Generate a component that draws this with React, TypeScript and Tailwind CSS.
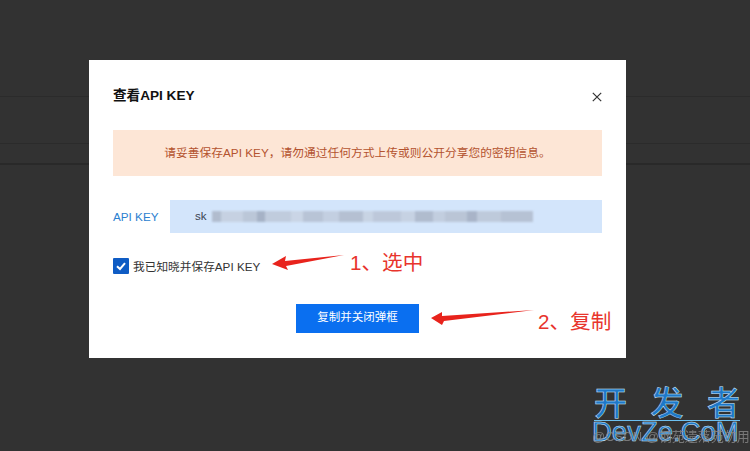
const cjk = 'font-["Liberation_Sans","Noto_Sans_CJK_SC",sans-serif]';

const blurBlocks = [
  ['w-[9px]', 'bg-[#a9b3c4]'], ['w-[22px]', 'bg-[#c3cddc]'], ['w-[14px]', 'bg-[#b6c0d0]'], ['w-[8px]', 'bg-[#9ba6b9]'],
  ['w-[26px]', 'bg-[#bcc6d6]'], ['w-[12px]', 'bg-[#c8d2e1]'], ['w-[20px]', 'bg-[#b2bccd]'], ['w-[16px]', 'bg-[#c0cadb]'],
  ['w-[24px]', 'bg-[#aeb8c9]'], ['w-[10px]', 'bg-[#c6d0df]'], ['w-[28px]', 'bg-[#b8c2d3]'], ['w-[14px]', 'bg-[#c4cede]'],
  ['w-[18px]', 'bg-[#a8b2c4]'], ['w-[12px]', 'bg-[#bfc9d9]'], ['w-[22px]', 'bg-[#b4bece]'], ['w-[10px]', 'bg-[#9fa9bc]'],
  ['w-[24px]', 'bg-[#bac4d4]'], ['w-[32px]', 'bg-[#b0bacb]'],
];

function Arrow({ className, width, height, points }: { className: string; width: number; height: number; points: string }) {
  return (
    <svg className={className} width={width} height={height} viewBox={`0 0 ${width} ${height}`}>
      <polygon points={points} fill="#e8231c" />
    </svg>
  );
}

export default function App() {
  return (
    <div className={`relative w-[750px] h-[451px] overflow-hidden bg-[#323232] ${cjk}`}>
      {/* dimmed page behind the dialog */}
      <div className="h-[97px] border-b border-[#2b2b2b]" />
      <div className="h-[47px] border-b border-[#2b2b2b]" />
      <div className="h-[21px] border-b-2 border-[#292929]" />

      <div className="absolute left-[89px] top-[60px] w-[537px] h-[298px] bg-white px-6 flex flex-col">
        <div className="flex items-start justify-between pt-[27px] h-[70px]">
          <h2 className="text-[13.6px] leading-[18px] font-bold text-[#111]">查看API KEY</h2>
          <svg className="mt-[5px]" width="10" height="10" viewBox="0 0 10 10" fill="none" stroke="#333" strokeWidth="1.2">
            <path d="M0.8 0.8L9.2 9.2M9.2 0.8L0.8 9.2" />
          </svg>
        </div>

        <div className="h-[46px] bg-[#fde6d6] flex items-center justify-center text-[11.75px] text-[#b4532f]">
          请妥善保存API KEY，请勿通过任何方式上传或则公开分享您的密钥信息。
        </div>

        <div className="flex items-center mt-6 h-[33px]">
          <span className="w-[57px] shrink-0 text-[11.7px] text-[#2b7fd0]">API KEY</span>
          <div className="flex-1 h-full bg-[#d3e5fb] flex items-center pl-[25px]">
            <span className="text-[11.5px] text-[#3a4350] w-[17px]">sk</span>
            <div className="flex h-[11px] blur-[1px] opacity-80">
              {blurBlocks.map(([w, c], i) => (
                <div key={i} className={`${w} ${c} h-full`} />
              ))}
            </div>
          </div>
        </div>

        <div className="flex items-center mt-[24px] gap-[4px]">
          <span className="w-4 h-4 bg-[#0f5cc4] rounded-[1px] flex items-center justify-center">
            <svg width="12" height="12" viewBox="0 0 12 12" fill="none" stroke="#fff" strokeWidth="2">
              <path d="M2 6.2L5 9L10 3.2" />
            </svg>
          </span>
          <span className="text-[11.7px] text-[#333] translate-y-[1px]">我已知晓并保存API KEY</span>
        </div>

        <button className="self-end mr-[183px] mt-[29px] w-[123px] h-[29px] bg-[#0a6ff0] text-white text-[11.5px]">
          复制并关闭弹框
        </button>
      </div>

      {/* annotations */}
      <Arrow className="absolute left-[272px] top-[253px]" width={72} height={17} points="0,11 14,3 13,8 72,2 14,13 16,17" />
      <Arrow className="absolute left-[431px] top-[310px]" width={103} height={16} points="0,8 11,2 11,6 103,0 13,11 11,15" />
      <span className="absolute left-[350px] top-[249px] text-[20.6px] leading-[28px] text-[#e8342c]">1、选中</span>
      <span className="absolute left-[538px] top-[308px] text-[20.6px] leading-[28px] text-[#e8342c]">2、复制</span>

      {/* watermark */}
      <div className="absolute left-[594px] top-[383px] w-[146px] flex justify-between border-b border-[#6cc0f0] text-[33px] leading-[37px] text-[#1e78c8] font-medium [-webkit-text-stroke:0.5px_#d6eafa] font-['Noto_Sans_CJK_SC',sans-serif]">
        <span>开</span>
        <span>发</span>
        <span>者</span>
      </div>
      <div className="absolute left-[592px] top-[417px] text-[27.5px] leading-[30px] text-[#1e78c8] [-webkit-text-stroke:0.5px_#d6eafa] font-['Liberation_Sans',sans-serif]">
        DevZe.CoM
      </div>
      <span className="absolute left-[592px] top-[428px] text-[13px] leading-[18px] text-[#8a8a8a] opacity-80">@CSDN @钢苑遗落苑勿用</span>
    </div>
  );
}
